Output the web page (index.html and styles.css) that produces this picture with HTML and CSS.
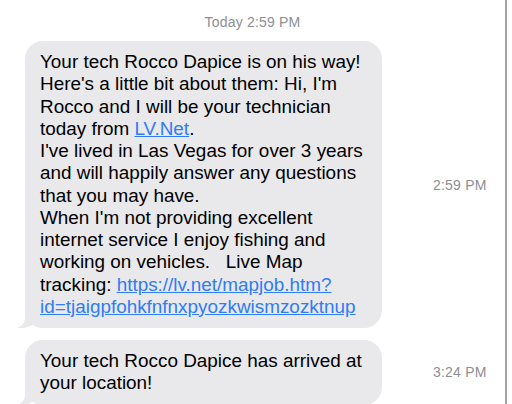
FILE: index.html
```html
<!DOCTYPE html>
<html lang="en">
<head>
    <meta charset="UTF-8">
    <meta name="viewport" content="width=device-width, initial-scale=1.0">
    <title>Messages</title>
    <link rel="stylesheet" href="styles.css">
</head>
<body>

    <div class="thread">
        <div class="day-stamp"><span class="day">Today</span> 2:59 PM</div>

        <div class="message-row">
            <div class="bubble">
                Your tech Rocco Dapice is on his way!<br>
                Here's a little bit about them: Hi, I'm<br>
                Rocco and I will be your technician<br>
                today from <a href="#">LV.Net</a>.<br>
                I've lived in Las Vegas for over 3 years<br>
                and will happily answer any questions<br>
                that you may have.<br>
                When I'm not providing excellent<br>
                internet service I enjoy fishing and<br>
                working on vehicles.&nbsp;&nbsp; Live Map<br>
                tracking: <a href="#">https://lv.net/mapjob.htm?<br>id=tjaigpfohkfnfnxpyozkwismzozktnup</a>
            </div>
            <div class="time">2:59 PM</div>
        </div>

        <div class="message-row">
            <div class="bubble">
                Your tech Rocco Dapice has arrived at<br>
                your location!
            </div>
            <div class="time">3:24 PM</div>
        </div>
    </div>

    <div class="edge"></div>

</body>
</html>
```

FILE: styles.css
```css
body {
    display: flex;
    margin: 0;
    height: 404px;
    overflow: hidden;
    background: #ffffff;
    font-family: "Liberation Sans", Arial, sans-serif;
    color: #000;
}

.thread {
    width: 505px;
    padding-left: 25px;
    box-sizing: border-box;
}

/* Date header */
.day-stamp {
    padding-top: 14px;
    height: 28px;
    box-sizing: border-box;
    text-align: center;
    font-size: 14px;
    letter-spacing: 0.2px;
    color: #8e8e93;
    margin-left: -25px;
}

/* Message rows */
.message-row {
    display: flex;
    align-items: center;
    margin-top: 13px;
}

.message-row + .message-row {
    margin-top: 12px;
}

.bubble {
    position: relative;
    width: 357px;
    box-sizing: border-box;
    padding: 10px 15px;
    background: #e9e9eb;
    border-radius: 18px;
    font-size: 18.9px;
    line-height: 22.25px;
}

/* little tail at bottom-left */
.bubble::before {
    content: "";
    position: absolute;
    left: -7px;
    bottom: 0;
    width: 20px;
    height: 20px;
    background: #e9e9eb;
    border-bottom-right-radius: 15px;
}

.bubble::after {
    content: "";
    position: absolute;
    left: -10px;
    bottom: 0;
    width: 10px;
    height: 20px;
    background: #ffffff;
    border-bottom-right-radius: 10px;
}

.bubble a {
    color: #2f7cf6;
    text-decoration: underline;
}

.time {
    margin-left: 51px;
    font-size: 14px;
    letter-spacing: 0.2px;
    color: #8e8e93;
}

.edge {
    width: 2px;
    background: #a3a3a3;
    flex-shrink: 0;
}
```
